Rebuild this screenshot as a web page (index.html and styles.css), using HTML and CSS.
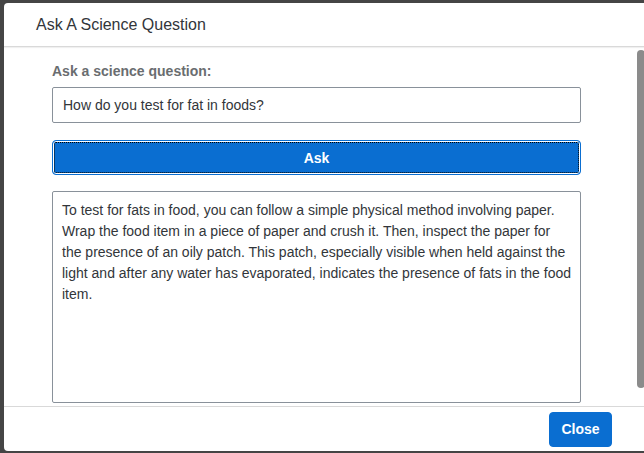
FILE: index.html
```html
<!DOCTYPE html>
<html lang="en">
<head>
<meta charset="utf-8">
<title>Ask A Science Question</title>
<link rel="stylesheet" href="styles.css">
</head>
<body>
<div class="backdrop">
  <section class="dialog">
    <header class="dialog-header">Ask A Science Question</header>
    <div class="dialog-content">
      <label class="field-label" for="q">Ask a science question:</label>
      <input class="field-input" id="q" type="text" value="How do you test for fat in foods?">
      <button class="btn btn-ask" type="button">Ask</button>
      <div class="answer">To test for fats in food, you can follow a simple physical method involving paper. Wrap the food item in a piece of paper and crush it. Then, inspect the paper for the presence of an oily patch. This patch, especially visible when held against the light and after any water has evaporated, indicates the presence of fats in the food item.</div>
      <div class="scroll-thumb"></div>
    </div>
    <footer class="dialog-footer">
      <button class="btn btn-close" type="button">Close</button>
    </footer>
  </section>
</div>
</body>
</html>
```

FILE: styles.css
```css
* { box-sizing: border-box; }
html, body {
  margin: 0;
  height: 100%;
  overflow: hidden;
}
body {
  background: #454545;
  font-family: "Liberation Sans", Arial, sans-serif;
  color: #32363a;
}
.backdrop {
  padding: 3px 0 0 4px;
}
.dialog {
  width: 644px;
  height: 448px;
  background: #fff;
  border-radius: 4px;
  display: flex;
  flex-direction: column;
  overflow: hidden;
}
.dialog-header {
  height: 44px;
  flex: none;
  display: flex;
  align-items: center;
  padding-left: 32px;
  font-size: 16px;
  color: #32363a;
  border-bottom: 1px solid #d9d9d9;
  box-shadow: 0 1px 1px rgba(0,0,0,0.06);
  position: relative;
  z-index: 1;
}
.dialog-content {
  flex: 1;
  position: relative;
  padding: 15px 67px 0 48px;
  display: flex;
  flex-direction: column;
}
.field-label {
  font-size: 14px;
  font-weight: bold;
  color: #6a6d70;
  line-height: 18px;
  height: 18px;
}
.field-input {
  margin-top: 7px;
  height: 36px;
  border: 1px solid #89919a;
  border-radius: 2px;
  padding: 0 10px;
  font-family: inherit;
  font-size: 14px;
  color: #32363a;
  outline: none;
}
.btn {
  font-family: inherit;
  font-weight: bold;
  font-size: 14px;
  color: #fff;
  background: #0a6ed1;
  border: 1px solid #0a6ed1;
  border-radius: 4px;
  cursor: pointer;
}
.btn-ask {
  margin-top: 17px;
  height: 35px;
  outline: 1px dotted #000;
  outline-offset: -3px;
  box-shadow: inset 0 0 0 1px #fff;
}
.answer {
  margin-top: 16px;
  height: 212px;
  border: 1px solid #89919a;
  border-radius: 2px;
  padding: 8px 9px;
  font-size: 14px;
  line-height: 21px;
  color: #32363a;
}
.scroll-thumb {
  position: absolute;
  right: 3px;
  top: 3px;
  width: 8px;
  height: 338px;
  background: #8b8b8b;
  border-radius: 4px;
}
.dialog-footer {
  height: 45px;
  flex: none;
  border-top: 1px solid #d9d9d9;
  display: flex;
  justify-content: flex-end;
  align-items: center;
  padding-right: 36px;
}
.btn-close {
  width: 63px;
  height: 35px;
}
```
